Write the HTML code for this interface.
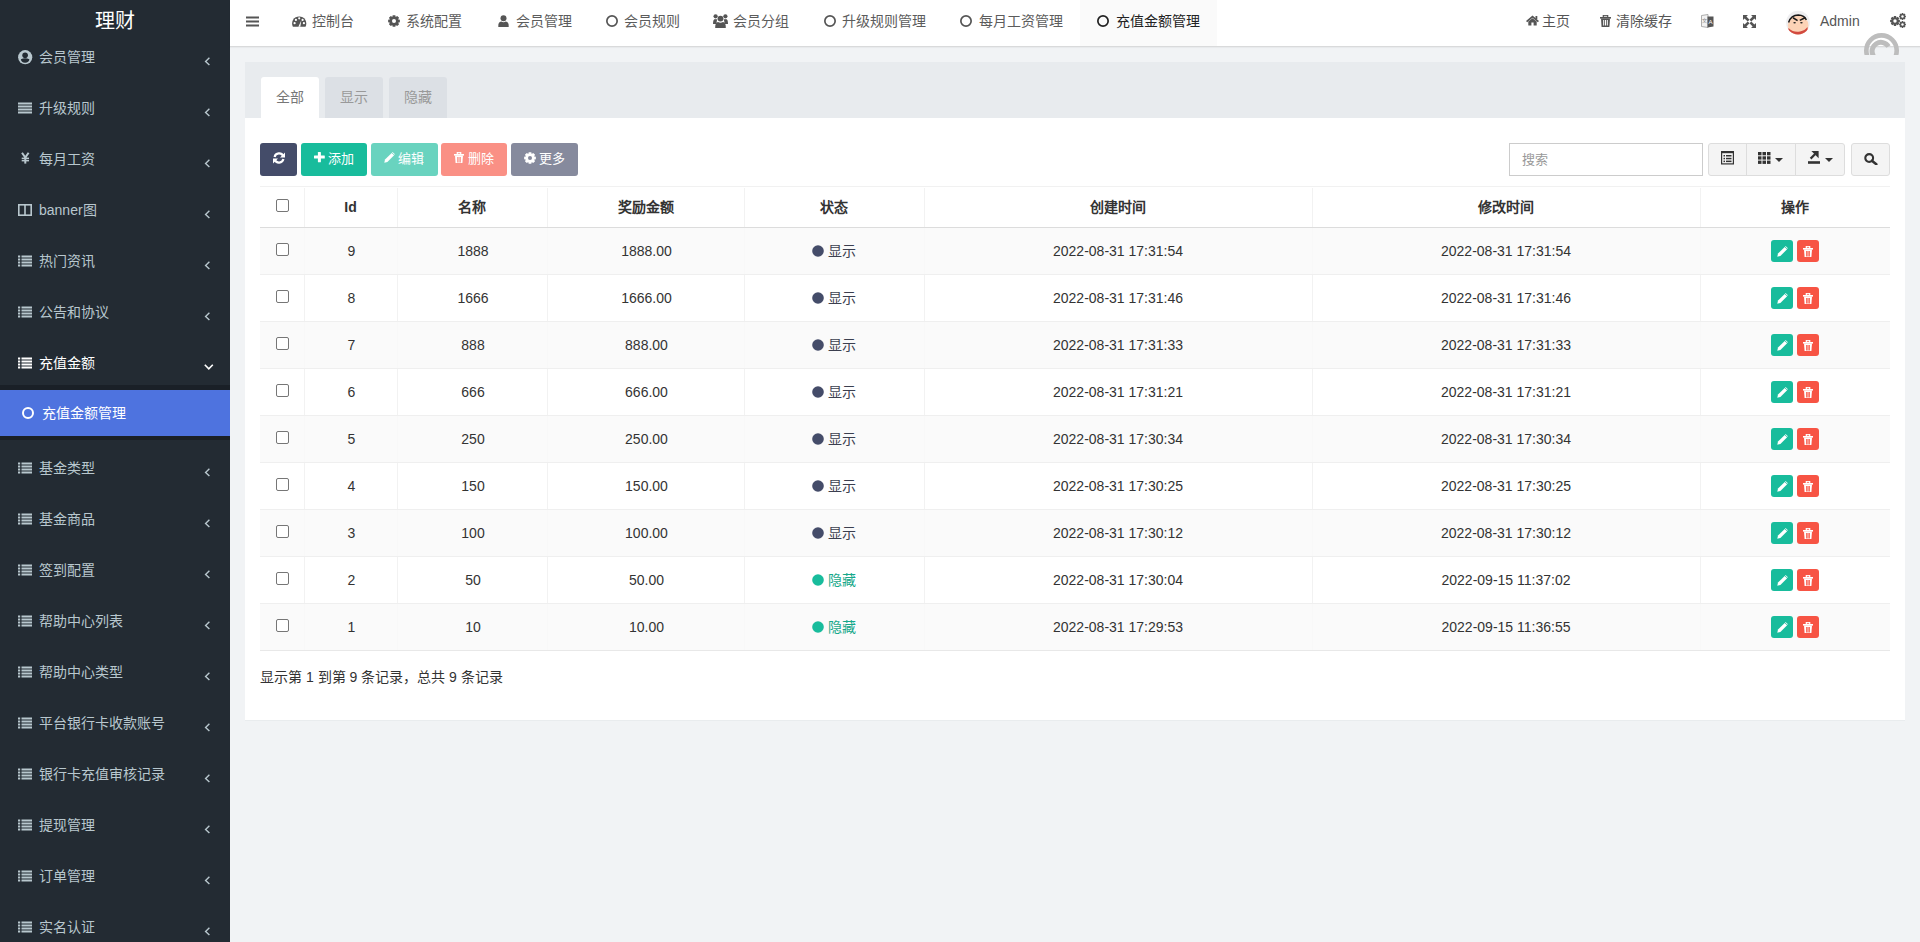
<!DOCTYPE html>
<html lang="zh-CN">
<head>
<meta charset="utf-8">
<style>
*{box-sizing:border-box;margin:0;padding:0}
html,body{width:1920px;height:942px;overflow:hidden}
body{font-family:"Liberation Sans",sans-serif;font-size:14px;color:#333;background:#f1f3f5;position:relative}
svg{display:block}
.abs{position:absolute}
/* sidebar */
#sb{position:absolute;left:0;top:0;width:230px;height:942px;background:#232b33;color:#b8c7ce}
#logo{position:absolute;left:0;top:9px;width:230px;text-align:center;font-size:20px;line-height:24px;color:#fff}
.mi{position:absolute;left:0;width:230px;height:20px;line-height:20px}
.mi .ic{position:absolute;left:18px;top:3px}
.mi .tx{position:absolute;left:39px;top:0;white-space:nowrap}
.mi .chev{position:absolute;left:204px;top:5px}
#tree{position:absolute;left:0;top:385px;width:230px;height:55px;background:#1a2027}
#act{position:absolute;left:0;top:390px;width:230px;height:46px;background:#4e73df;color:#fff}
/* header */
#hd{position:absolute;left:230px;top:0;width:1690px;height:47px;background:#fff;border-bottom:1px solid #d9dadb;box-shadow:0 1px 1px rgba(0,0,0,0.035)}
.nv{position:absolute;top:11px;height:20px;line-height:20px;color:#555;white-space:nowrap}
.nv span{position:absolute;top:0}
/* panel */
#panel{position:absolute;left:245px;top:62px;width:1660px;height:659px;background:#fff;border-bottom:1px solid #e9ecee}
#ph{position:absolute;left:0;top:0;width:1660px;height:56px;background:#e8ebee}
.tab{position:absolute;top:15px;width:58px;height:41px;border-radius:3px 3px 0 0;text-align:center;line-height:40px;color:#999;background:#dce0e5}
.tab.on{background:#fff;color:#777}
.btn{position:absolute;top:81px;height:33px;border-radius:3px;color:#fff;line-height:33px;font-size:13px;white-space:nowrap}
.btn svg{position:absolute}
.btn span{position:absolute;top:0}
.bw{position:absolute;top:81px;height:33px;background:#f4f4f4;border:1px solid #ddd}
/* table */
#tbl{position:absolute;left:15px;top:124px;width:1630px;height:465px;border-top:1px solid #f1f1f1}
.tr{position:absolute;left:0;width:1630px;height:47px}
.td{position:absolute;top:0;height:100%;text-align:center}
.vl{position:absolute;width:1px;background:#f2f2f2}
.cb{position:absolute;width:13px;height:13px;border:1px solid #767676;border-radius:2px;background:#fff}
.cell{position:absolute;height:20px;line-height:20px;text-align:center;white-space:nowrap}
.th{font-weight:bold;color:#333}
.ops{position:absolute;width:22px;height:22px;border-radius:3px}
</style>
</head>
<body>
<!-- SIDEBAR -->
<div id="sb">
  <div id="logo">理财</div>
  <div id="tree"></div>
  <div id="act"></div>
  <!--items-->
  <div class="mi" style="top:47px;color:#b8c7ce"><div class="ic" style="left:18px;top:3px"><svg width="15" height="15" viewBox="0 0 15 15" ><circle cx="7.2" cy="7.2" r="7.1" fill="#b8c7ce"/><circle cx="7.1" cy="5.3" r="2.8" fill="#232b33"/><path d="M2.9 9.2 Q7.1 7.2 11.4 9.2 Q11 12.6 7.1 12.8 Q3.2 12.6 2.9 9.2Z" fill="#232b33"/></svg></div><div class="tx">会员管理</div><div class="chev" style="left:204px;top:10px"><svg width="6" height="10" viewBox="0 0 6 10" ><polyline points="5.4,0.8 1.6,4.4 5.4,8" fill="none" stroke="#b8c7ce" stroke-width="1.4"/></svg></div></div>
<div class="mi" style="top:98px;color:#b8c7ce"><div class="ic" style="left:18px;top:4px"><svg width="14" height="12" viewBox="0 0 14 12" ><rect x="0" y="0.5" width="14" height="2" fill="#b8c7ce"/><rect x="0" y="3.5" width="14" height="2" fill="#b8c7ce"/><rect x="0" y="6.5" width="14" height="2" fill="#b8c7ce"/><rect x="0" y="9.5" width="14" height="2" fill="#b8c7ce"/></svg></div><div class="tx">升级规则</div><div class="chev" style="left:204px;top:10px"><svg width="6" height="10" viewBox="0 0 6 10" ><polyline points="5.4,0.8 1.6,4.4 5.4,8" fill="none" stroke="#b8c7ce" stroke-width="1.4"/></svg></div></div>
<div class="mi" style="top:149px;color:#b8c7ce"><div class="ic" style="left:21px;top:3px"><svg width="9" height="12" viewBox="0 0 9 12" ><polyline points="1,0.8 4.3,5.6 7.6,0.8" fill="none" stroke="#b8c7ce" stroke-width="2"/><rect x="0.7" y="5.6" width="7.3" height="1.5" fill="#b8c7ce"/><rect x="0.7" y="7.9" width="7.3" height="1.5" fill="#b8c7ce"/><rect x="3.3" y="5" width="2" height="6.6" fill="#b8c7ce"/></svg></div><div class="tx">每月工资</div><div class="chev" style="left:204px;top:10px"><svg width="6" height="10" viewBox="0 0 6 10" ><polyline points="5.4,0.8 1.6,4.4 5.4,8" fill="none" stroke="#b8c7ce" stroke-width="1.4"/></svg></div></div>
<div class="mi" style="top:200px;color:#b8c7ce"><div class="ic" style="left:18px;top:4px"><svg width="14" height="12" viewBox="0 0 14 12" ><rect x="0.8" y="0.8" width="12.4" height="10.4" fill="none" stroke="#b8c7ce" stroke-width="1.6"/><rect x="6.2" y="1" width="1.6" height="10" fill="#b8c7ce"/></svg></div><div class="tx">banner图</div><div class="chev" style="left:204px;top:10px"><svg width="6" height="10" viewBox="0 0 6 10" ><polyline points="5.4,0.8 1.6,4.4 5.4,8" fill="none" stroke="#b8c7ce" stroke-width="1.4"/></svg></div></div>
<div class="mi" style="top:251px;color:#b8c7ce"><div class="ic" style="left:18px;top:4px"><svg width="14" height="12" viewBox="0 0 14 12" ><rect x="0" y="0.5" width="2.2" height="2" fill="#b8c7ce"/><rect x="3.5" y="0.5" width="10.5" height="2" fill="#b8c7ce"/><rect x="0" y="3.5" width="2.2" height="2" fill="#b8c7ce"/><rect x="3.5" y="3.5" width="10.5" height="2" fill="#b8c7ce"/><rect x="0" y="6.5" width="2.2" height="2" fill="#b8c7ce"/><rect x="3.5" y="6.5" width="10.5" height="2" fill="#b8c7ce"/><rect x="0" y="9.5" width="2.2" height="2" fill="#b8c7ce"/><rect x="3.5" y="9.5" width="10.5" height="2" fill="#b8c7ce"/></svg></div><div class="tx">热门资讯</div><div class="chev" style="left:204px;top:10px"><svg width="6" height="10" viewBox="0 0 6 10" ><polyline points="5.4,0.8 1.6,4.4 5.4,8" fill="none" stroke="#b8c7ce" stroke-width="1.4"/></svg></div></div>
<div class="mi" style="top:302px;color:#b8c7ce"><div class="ic" style="left:18px;top:4px"><svg width="14" height="12" viewBox="0 0 14 12" ><rect x="0" y="0.5" width="2.2" height="2" fill="#b8c7ce"/><rect x="3.5" y="0.5" width="10.5" height="2" fill="#b8c7ce"/><rect x="0" y="3.5" width="2.2" height="2" fill="#b8c7ce"/><rect x="3.5" y="3.5" width="10.5" height="2" fill="#b8c7ce"/><rect x="0" y="6.5" width="2.2" height="2" fill="#b8c7ce"/><rect x="3.5" y="6.5" width="10.5" height="2" fill="#b8c7ce"/><rect x="0" y="9.5" width="2.2" height="2" fill="#b8c7ce"/><rect x="3.5" y="9.5" width="10.5" height="2" fill="#b8c7ce"/></svg></div><div class="tx">公告和协议</div><div class="chev" style="left:204px;top:10px"><svg width="6" height="10" viewBox="0 0 6 10" ><polyline points="5.4,0.8 1.6,4.4 5.4,8" fill="none" stroke="#b8c7ce" stroke-width="1.4"/></svg></div></div>
<div class="mi" style="top:353px;color:#fff"><div class="ic" style="left:18px;top:4px"><svg width="14" height="12" viewBox="0 0 14 12" ><rect x="0" y="0.5" width="2.2" height="2" fill="#fff"/><rect x="3.5" y="0.5" width="10.5" height="2" fill="#fff"/><rect x="0" y="3.5" width="2.2" height="2" fill="#fff"/><rect x="3.5" y="3.5" width="10.5" height="2" fill="#fff"/><rect x="0" y="6.5" width="2.2" height="2" fill="#fff"/><rect x="3.5" y="6.5" width="10.5" height="2" fill="#fff"/><rect x="0" y="9.5" width="2.2" height="2" fill="#fff"/><rect x="3.5" y="9.5" width="10.5" height="2" fill="#fff"/></svg></div><div class="tx">充值金额</div><div class="chev" style="left:204px;top:11px"><svg width="10" height="6" viewBox="0 0 10 6" ><polyline points="0.8,0.8 4.8,4.8 8.8,0.8" fill="none" stroke="#fff" stroke-width="1.6"/></svg></div></div>
<div class="mi" style="top:458px;color:#b8c7ce"><div class="ic" style="left:18px;top:4px"><svg width="14" height="12" viewBox="0 0 14 12" ><rect x="0" y="0.5" width="2.2" height="2" fill="#b8c7ce"/><rect x="3.5" y="0.5" width="10.5" height="2" fill="#b8c7ce"/><rect x="0" y="3.5" width="2.2" height="2" fill="#b8c7ce"/><rect x="3.5" y="3.5" width="10.5" height="2" fill="#b8c7ce"/><rect x="0" y="6.5" width="2.2" height="2" fill="#b8c7ce"/><rect x="3.5" y="6.5" width="10.5" height="2" fill="#b8c7ce"/><rect x="0" y="9.5" width="2.2" height="2" fill="#b8c7ce"/><rect x="3.5" y="9.5" width="10.5" height="2" fill="#b8c7ce"/></svg></div><div class="tx">基金类型</div><div class="chev" style="left:204px;top:10px"><svg width="6" height="10" viewBox="0 0 6 10" ><polyline points="5.4,0.8 1.6,4.4 5.4,8" fill="none" stroke="#b8c7ce" stroke-width="1.4"/></svg></div></div>
<div class="mi" style="top:509px;color:#b8c7ce"><div class="ic" style="left:18px;top:4px"><svg width="14" height="12" viewBox="0 0 14 12" ><rect x="0" y="0.5" width="2.2" height="2" fill="#b8c7ce"/><rect x="3.5" y="0.5" width="10.5" height="2" fill="#b8c7ce"/><rect x="0" y="3.5" width="2.2" height="2" fill="#b8c7ce"/><rect x="3.5" y="3.5" width="10.5" height="2" fill="#b8c7ce"/><rect x="0" y="6.5" width="2.2" height="2" fill="#b8c7ce"/><rect x="3.5" y="6.5" width="10.5" height="2" fill="#b8c7ce"/><rect x="0" y="9.5" width="2.2" height="2" fill="#b8c7ce"/><rect x="3.5" y="9.5" width="10.5" height="2" fill="#b8c7ce"/></svg></div><div class="tx">基金商品</div><div class="chev" style="left:204px;top:10px"><svg width="6" height="10" viewBox="0 0 6 10" ><polyline points="5.4,0.8 1.6,4.4 5.4,8" fill="none" stroke="#b8c7ce" stroke-width="1.4"/></svg></div></div>
<div class="mi" style="top:560px;color:#b8c7ce"><div class="ic" style="left:18px;top:4px"><svg width="14" height="12" viewBox="0 0 14 12" ><rect x="0" y="0.5" width="2.2" height="2" fill="#b8c7ce"/><rect x="3.5" y="0.5" width="10.5" height="2" fill="#b8c7ce"/><rect x="0" y="3.5" width="2.2" height="2" fill="#b8c7ce"/><rect x="3.5" y="3.5" width="10.5" height="2" fill="#b8c7ce"/><rect x="0" y="6.5" width="2.2" height="2" fill="#b8c7ce"/><rect x="3.5" y="6.5" width="10.5" height="2" fill="#b8c7ce"/><rect x="0" y="9.5" width="2.2" height="2" fill="#b8c7ce"/><rect x="3.5" y="9.5" width="10.5" height="2" fill="#b8c7ce"/></svg></div><div class="tx">签到配置</div><div class="chev" style="left:204px;top:10px"><svg width="6" height="10" viewBox="0 0 6 10" ><polyline points="5.4,0.8 1.6,4.4 5.4,8" fill="none" stroke="#b8c7ce" stroke-width="1.4"/></svg></div></div>
<div class="mi" style="top:611px;color:#b8c7ce"><div class="ic" style="left:18px;top:4px"><svg width="14" height="12" viewBox="0 0 14 12" ><rect x="0" y="0.5" width="2.2" height="2" fill="#b8c7ce"/><rect x="3.5" y="0.5" width="10.5" height="2" fill="#b8c7ce"/><rect x="0" y="3.5" width="2.2" height="2" fill="#b8c7ce"/><rect x="3.5" y="3.5" width="10.5" height="2" fill="#b8c7ce"/><rect x="0" y="6.5" width="2.2" height="2" fill="#b8c7ce"/><rect x="3.5" y="6.5" width="10.5" height="2" fill="#b8c7ce"/><rect x="0" y="9.5" width="2.2" height="2" fill="#b8c7ce"/><rect x="3.5" y="9.5" width="10.5" height="2" fill="#b8c7ce"/></svg></div><div class="tx">帮助中心列表</div><div class="chev" style="left:204px;top:10px"><svg width="6" height="10" viewBox="0 0 6 10" ><polyline points="5.4,0.8 1.6,4.4 5.4,8" fill="none" stroke="#b8c7ce" stroke-width="1.4"/></svg></div></div>
<div class="mi" style="top:662px;color:#b8c7ce"><div class="ic" style="left:18px;top:4px"><svg width="14" height="12" viewBox="0 0 14 12" ><rect x="0" y="0.5" width="2.2" height="2" fill="#b8c7ce"/><rect x="3.5" y="0.5" width="10.5" height="2" fill="#b8c7ce"/><rect x="0" y="3.5" width="2.2" height="2" fill="#b8c7ce"/><rect x="3.5" y="3.5" width="10.5" height="2" fill="#b8c7ce"/><rect x="0" y="6.5" width="2.2" height="2" fill="#b8c7ce"/><rect x="3.5" y="6.5" width="10.5" height="2" fill="#b8c7ce"/><rect x="0" y="9.5" width="2.2" height="2" fill="#b8c7ce"/><rect x="3.5" y="9.5" width="10.5" height="2" fill="#b8c7ce"/></svg></div><div class="tx">帮助中心类型</div><div class="chev" style="left:204px;top:10px"><svg width="6" height="10" viewBox="0 0 6 10" ><polyline points="5.4,0.8 1.6,4.4 5.4,8" fill="none" stroke="#b8c7ce" stroke-width="1.4"/></svg></div></div>
<div class="mi" style="top:713px;color:#b8c7ce"><div class="ic" style="left:18px;top:4px"><svg width="14" height="12" viewBox="0 0 14 12" ><rect x="0" y="0.5" width="2.2" height="2" fill="#b8c7ce"/><rect x="3.5" y="0.5" width="10.5" height="2" fill="#b8c7ce"/><rect x="0" y="3.5" width="2.2" height="2" fill="#b8c7ce"/><rect x="3.5" y="3.5" width="10.5" height="2" fill="#b8c7ce"/><rect x="0" y="6.5" width="2.2" height="2" fill="#b8c7ce"/><rect x="3.5" y="6.5" width="10.5" height="2" fill="#b8c7ce"/><rect x="0" y="9.5" width="2.2" height="2" fill="#b8c7ce"/><rect x="3.5" y="9.5" width="10.5" height="2" fill="#b8c7ce"/></svg></div><div class="tx">平台银行卡收款账号</div><div class="chev" style="left:204px;top:10px"><svg width="6" height="10" viewBox="0 0 6 10" ><polyline points="5.4,0.8 1.6,4.4 5.4,8" fill="none" stroke="#b8c7ce" stroke-width="1.4"/></svg></div></div>
<div class="mi" style="top:764px;color:#b8c7ce"><div class="ic" style="left:18px;top:4px"><svg width="14" height="12" viewBox="0 0 14 12" ><rect x="0" y="0.5" width="2.2" height="2" fill="#b8c7ce"/><rect x="3.5" y="0.5" width="10.5" height="2" fill="#b8c7ce"/><rect x="0" y="3.5" width="2.2" height="2" fill="#b8c7ce"/><rect x="3.5" y="3.5" width="10.5" height="2" fill="#b8c7ce"/><rect x="0" y="6.5" width="2.2" height="2" fill="#b8c7ce"/><rect x="3.5" y="6.5" width="10.5" height="2" fill="#b8c7ce"/><rect x="0" y="9.5" width="2.2" height="2" fill="#b8c7ce"/><rect x="3.5" y="9.5" width="10.5" height="2" fill="#b8c7ce"/></svg></div><div class="tx">银行卡充值审核记录</div><div class="chev" style="left:204px;top:10px"><svg width="6" height="10" viewBox="0 0 6 10" ><polyline points="5.4,0.8 1.6,4.4 5.4,8" fill="none" stroke="#b8c7ce" stroke-width="1.4"/></svg></div></div>
<div class="mi" style="top:815px;color:#b8c7ce"><div class="ic" style="left:18px;top:4px"><svg width="14" height="12" viewBox="0 0 14 12" ><rect x="0" y="0.5" width="2.2" height="2" fill="#b8c7ce"/><rect x="3.5" y="0.5" width="10.5" height="2" fill="#b8c7ce"/><rect x="0" y="3.5" width="2.2" height="2" fill="#b8c7ce"/><rect x="3.5" y="3.5" width="10.5" height="2" fill="#b8c7ce"/><rect x="0" y="6.5" width="2.2" height="2" fill="#b8c7ce"/><rect x="3.5" y="6.5" width="10.5" height="2" fill="#b8c7ce"/><rect x="0" y="9.5" width="2.2" height="2" fill="#b8c7ce"/><rect x="3.5" y="9.5" width="10.5" height="2" fill="#b8c7ce"/></svg></div><div class="tx">提现管理</div><div class="chev" style="left:204px;top:10px"><svg width="6" height="10" viewBox="0 0 6 10" ><polyline points="5.4,0.8 1.6,4.4 5.4,8" fill="none" stroke="#b8c7ce" stroke-width="1.4"/></svg></div></div>
<div class="mi" style="top:866px;color:#b8c7ce"><div class="ic" style="left:18px;top:4px"><svg width="14" height="12" viewBox="0 0 14 12" ><rect x="0" y="0.5" width="2.2" height="2" fill="#b8c7ce"/><rect x="3.5" y="0.5" width="10.5" height="2" fill="#b8c7ce"/><rect x="0" y="3.5" width="2.2" height="2" fill="#b8c7ce"/><rect x="3.5" y="3.5" width="10.5" height="2" fill="#b8c7ce"/><rect x="0" y="6.5" width="2.2" height="2" fill="#b8c7ce"/><rect x="3.5" y="6.5" width="10.5" height="2" fill="#b8c7ce"/><rect x="0" y="9.5" width="2.2" height="2" fill="#b8c7ce"/><rect x="3.5" y="9.5" width="10.5" height="2" fill="#b8c7ce"/></svg></div><div class="tx">订单管理</div><div class="chev" style="left:204px;top:10px"><svg width="6" height="10" viewBox="0 0 6 10" ><polyline points="5.4,0.8 1.6,4.4 5.4,8" fill="none" stroke="#b8c7ce" stroke-width="1.4"/></svg></div></div>
<div class="mi" style="top:917px;color:#b8c7ce"><div class="ic" style="left:18px;top:4px"><svg width="14" height="12" viewBox="0 0 14 12" ><rect x="0" y="0.5" width="2.2" height="2" fill="#b8c7ce"/><rect x="3.5" y="0.5" width="10.5" height="2" fill="#b8c7ce"/><rect x="0" y="3.5" width="2.2" height="2" fill="#b8c7ce"/><rect x="3.5" y="3.5" width="10.5" height="2" fill="#b8c7ce"/><rect x="0" y="6.5" width="2.2" height="2" fill="#b8c7ce"/><rect x="3.5" y="6.5" width="10.5" height="2" fill="#b8c7ce"/><rect x="0" y="9.5" width="2.2" height="2" fill="#b8c7ce"/><rect x="3.5" y="9.5" width="10.5" height="2" fill="#b8c7ce"/></svg></div><div class="tx">实名认证</div><div class="chev" style="left:204px;top:10px"><svg width="6" height="10" viewBox="0 0 6 10" ><polyline points="5.4,0.8 1.6,4.4 5.4,8" fill="none" stroke="#b8c7ce" stroke-width="1.4"/></svg></div></div>
<div class="mi" style="top:403px;color:#fff"><div class="ic" style="left:22px;top:4px"><svg width="12" height="12" viewBox="0 0 12 12" ><circle cx="6.0" cy="6.0" r="5.0" fill="none" stroke="#fff" stroke-width="2"/></svg></div><div class="tx" style="left:42px">充值金额管理</div></div>

</div>

<!-- HEADER -->
<div id="hd">
<div class="abs" style="left:16px;top:16px"><svg width="13" height="11" viewBox="0 0 13 11" ><rect x="0" y="0.5" width="13" height="2" fill="#555"/><rect x="0" y="4.5" width="13" height="2" fill="#555"/><rect x="0" y="8.5" width="13" height="2" fill="#555"/></svg></div>
<div class="abs" style="left:850px;top:0;width:137px;height:46px;background:#fafafa"></div>
<div class="nv" style="left:62px;color:#5c5c5c"><div class="abs" style="left:0;top:5px"><svg width="15" height="11" viewBox="0 0 15 11" ><path d="M0.9 10.8 A7.1 7.1 0 1 1 13.5 10.8 Z" fill="#555"/><circle cx="2.6" cy="7.2" r="1.1" fill="#fff"/><circle cx="3.9" cy="3.9" r="1.1" fill="#fff"/><circle cx="7.2" cy="2.3" r="1.1" fill="#fff"/><circle cx="10.6" cy="3.9" r="1.1" fill="#fff"/><circle cx="11.9" cy="7.2" r="1.1" fill="#fff"/><path d="M6.3 10.8 L9.3 4.6 L8.3 10.8 Z" fill="#fff"/></svg></div><span style="left:20px">控制台</span></div>
<div class="nv" style="left:158px;color:#5c5c5c"><div class="abs" style="left:0;top:4px"><svg width="12" height="12" viewBox="0 0 12 12" ><polygon points="11.86,4.69 11.86,7.31 9.98,7.68 10.00,7.62 11.07,9.21 9.21,11.07 7.62,10.00 7.68,9.98 7.31,11.86 4.69,11.86 4.32,9.98 4.38,10.00 2.79,11.07 0.93,9.21 2.00,7.62 2.02,7.68 0.14,7.31 0.14,4.69 2.02,4.32 2.00,4.38 0.93,2.79 2.79,0.93 4.38,2.00 4.32,2.02 4.69,0.14 7.31,0.14 7.68,2.02 7.62,2.00 9.21,0.93 11.07,2.79 10.00,4.38 9.98,4.32" fill="#555"/><circle cx="6.0" cy="6.0" r="2.04" fill="#fff"/></svg></div><span style="left:18px">系统配置</span></div>
<div class="nv" style="left:268px;color:#5c5c5c"><div class="abs" style="left:0;top:4px"><svg width="11" height="12" viewBox="0 0 11 12" ><circle cx="5.5" cy="3.2" r="3" fill="#555"/><path d="M0.3 12 Q0 6.8 3.2 6.6 Q5.5 8 7.8 6.6 Q11 6.8 10.7 12 Z" fill="#555"/></svg></div><span style="left:18px">会员管理</span></div>
<div class="nv" style="left:376px;color:#5c5c5c"><div class="abs" style="left:0;top:4px"><svg width="12" height="12" viewBox="0 0 12 12" ><circle cx="6.0" cy="6.0" r="5.15" fill="none" stroke="#555" stroke-width="1.7"/></svg></div><span style="left:18px">会员规则</span></div>
<div class="nv" style="left:483px;color:#5c5c5c"><div class="abs" style="left:0;top:3px"><svg width="15" height="14" viewBox="0 0 15 14" ><circle cx="7.5" cy="4.6" r="2.9" fill="#555"/><path d="M2.2 14 Q2 8.3 5 8 Q7.5 9.3 10 8 Q13 8.3 12.8 14Z" fill="#555"/><circle cx="2.6" cy="2.3" r="2.1" fill="#555"/><path d="M0 10 Q0 5.2 2 5 Q3 5.6 4.4 5.2 Q3.3 7 3.5 10Z" fill="#555"/><circle cx="12.4" cy="2.3" r="2.1" fill="#555"/><path d="M15 10 Q15 5.2 13 5 Q12 5.6 10.6 5.2 Q11.7 7 11.5 10Z" fill="#555"/></svg></div><span style="left:20px">会员分组</span></div>
<div class="nv" style="left:594px;color:#5c5c5c"><div class="abs" style="left:0;top:4px"><svg width="12" height="12" viewBox="0 0 12 12" ><circle cx="6.0" cy="6.0" r="5.15" fill="none" stroke="#555" stroke-width="1.7"/></svg></div><span style="left:18px">升级规则管理</span></div>
<div class="nv" style="left:730px;color:#5c5c5c"><div class="abs" style="left:0;top:4px"><svg width="12" height="12" viewBox="0 0 12 12" ><circle cx="6.0" cy="6.0" r="5.15" fill="none" stroke="#555" stroke-width="1.7"/></svg></div><span style="left:19px">每月工资管理</span></div>
<div class="nv" style="left:867px;color:#222"><div class="abs" style="left:0;top:4px"><svg width="12" height="12" viewBox="0 0 12 12" ><circle cx="6.0" cy="6.0" r="5.15" fill="none" stroke="#222" stroke-width="1.7"/></svg></div><span style="left:19px">充值金额管理</span></div>
<div class="nv" style="left:1296px"><div class="abs" style="left:0;top:4px"><svg width="13" height="11" viewBox="0 0 13 11" ><path d="M6.5 0.5 L13 6 L11.8 7.2 L6.5 2.8 L1.2 7.2 L0 6Z" fill="#555"/><path d="M2.3 6.6 L6.5 3.3 L10.7 6.6 V10.5 H7.6 V7.6 H5.4 V10.5 H2.3Z" fill="#555"/><rect x="9.5" y="1" width="1.8" height="3" fill="#555"/></svg></div><span style="left:16px">主页</span></div>
<div class="nv" style="left:1370px"><div class="abs" style="left:0;top:4px"><svg width="11" height="12" viewBox="0 0 11 12" ><rect x="0" y="2" width="11" height="1.6" fill="#555"/><rect x="3.3" y="0.3" width="4.4" height="2" fill="none" stroke="#555" stroke-width="1.2"/><path d="M1 3.5 H10 L9.4 12 H1.6Z" fill="#555"/><rect x="3.2" y="5" width="1" height="5.5" fill="#fff"/><rect x="5.0" y="5" width="1" height="5.5" fill="#fff"/><rect x="6.8" y="5" width="1" height="5.5" fill="#fff"/></svg></div><span style="left:16px">清除缓存</span></div>
<div class="abs" style="left:1471px;top:14px"><svg width="13" height="14" viewBox="0 0 13 14" ><path d="M0.5 1.5 L7 0.5 V13.5 L0.5 12.5Z" fill="#f2f2f2" stroke="#999" stroke-width="0.8"/><path d="M6.5 2.5 L12.5 2.5 V12.5 L6.5 13.5Z" fill="#555"/><text x="9.5" y="10" font-size="6" fill="#fff" text-anchor="middle" font-family="Liberation Sans">A</text><text x="3.5" y="8" font-size="5" fill="#888" text-anchor="middle">文</text></svg></div>
<div class="abs" style="left:1513px;top:15px"><svg width="13" height="13" viewBox="0 0 13 13" ><path d="M0 0 H5 L3.4 1.6 L6.5 4.7 L4.7 6.5 L1.6 3.4 L0 5Z" fill="#555"/><path d="M13 0 V5 L11.4 3.4 L8.3 6.5 L6.5 4.7 L9.6 1.6 L8 0Z" fill="#555"/><path d="M0 13 V8 L1.6 9.6 L4.7 6.5 L6.5 8.3 L3.4 11.4 L5 13Z" fill="#555"/><path d="M13 13 H8 L9.6 11.4 L6.5 8.3 L8.3 6.5 L11.4 9.6 L13 8Z" fill="#555"/></svg></div>
<div class="abs" style="left:1556px;top:10px"><svg width="24" height="26" viewBox="0 0 24 26"><defs><clipPath id="avc"><circle cx="12" cy="12.7" r="11.9"/></clipPath></defs><circle cx="12" cy="12.7" r="11.9" fill="#eeeef0"/><g clip-path="url(#avc)"><ellipse cx="12.2" cy="15.6" rx="10.3" ry="10.4" fill="#fcd3b6"/><path d="M2.4 18 Q8 23 14 21.5 Q19 20.5 21.5 17 L22 26 L2 26Z" fill="#d24a3f"/><path d="M2.6 12.5 Q5 5.2 12.3 5.1 Q18.5 5.3 20.3 10" fill="none" stroke="#1a1a1a" stroke-width="1.5"/><path d="M7 7.8 L11.6 10.6" stroke="#1a1a1a" stroke-width="1.6"/><path d="M13.8 10.4 L19 7.8" stroke="#1a1a1a" stroke-width="1.6"/><ellipse cx="8.6" cy="12.7" rx="1.3" ry="0.8" fill="#222"/><ellipse cx="15.4" cy="12.7" rx="1.3" ry="0.8" fill="#222"/></g></svg></div>
<div class="nv" style="left:1590px"><span style="left:0">Admin</span></div>
<div class="abs" style="left:1660px;top:13px"><svg width="16" height="15" viewBox="0 0 16 15" ><g transform="translate(0,3)"><polygon points="9.88,3.91 9.88,6.09 8.32,6.40 8.34,6.35 9.22,7.68 7.68,9.22 6.35,8.34 6.40,8.32 6.09,9.88 3.91,9.88 3.60,8.32 3.65,8.34 2.32,9.22 0.78,7.68 1.66,6.35 1.68,6.40 0.12,6.09 0.12,3.91 1.68,3.60 1.66,3.65 0.78,2.32 2.32,0.78 3.65,1.66 3.60,1.68 3.91,0.12 6.09,0.12 6.40,1.68 6.35,1.66 7.68,0.78 9.22,2.32 8.34,3.65 8.32,3.60" fill="#555"/><circle cx="5.0" cy="5.0" r="1.70" fill="#fff"/></g><g transform="translate(9,0)"><polygon points="6.92,2.74 6.92,4.26 5.82,4.48 5.84,4.45 6.46,5.38 5.38,6.46 4.45,5.84 4.48,5.82 4.26,6.92 2.74,6.92 2.52,5.82 2.55,5.84 1.62,6.46 0.54,5.38 1.16,4.45 1.18,4.48 0.08,4.26 0.08,2.74 1.18,2.52 1.16,2.55 0.54,1.62 1.62,0.54 2.55,1.16 2.52,1.18 2.74,0.08 4.26,0.08 4.48,1.18 4.45,1.16 5.38,0.54 6.46,1.62 5.84,2.55 5.82,2.52" fill="#555"/><circle cx="3.5" cy="3.5" r="1.19" fill="#fff"/></g><g transform="translate(9,8)"><polygon points="6.92,2.74 6.92,4.26 5.82,4.48 5.84,4.45 6.46,5.38 5.38,6.46 4.45,5.84 4.48,5.82 4.26,6.92 2.74,6.92 2.52,5.82 2.55,5.84 1.62,6.46 0.54,5.38 1.16,4.45 1.18,4.48 0.08,4.26 0.08,2.74 1.18,2.52 1.16,2.55 0.54,1.62 1.62,0.54 2.55,1.16 2.52,1.18 2.74,0.08 4.26,0.08 4.48,1.18 4.45,1.16 5.38,0.54 6.46,1.62 5.84,2.55 5.82,2.52" fill="#555"/><circle cx="3.5" cy="3.5" r="1.19" fill="#fff"/></g></svg></div>

</div>

<!-- PANEL -->
<div id="panel">
  <div id="ph">
    <div class="tab on" style="left:16px">全部</div>
    <div class="tab" style="left:80px">显示</div>
    <div class="tab" style="left:144px">隐藏</div>
  </div>
<div class="btn" style="left:15px;width:37px;background:#444c69"><div class="abs" style="left:13px;top:9px"><svg width="12" height="12" viewBox="0 0 12 12" ><path d="M10.3 4.2 A4.6 4.6 0 0 0 1.6 5" fill="none" stroke="#fff" stroke-width="2.2"/><path d="M12 0.5 V5.5 H7Z" fill="#fff"/><path d="M1.7 7.8 A4.6 4.6 0 0 0 10.4 7" fill="none" stroke="#fff" stroke-width="2.2"/><path d="M0 11.5 V6.5 H5Z" fill="#fff"/></svg></div></div>
<div class="btn" style="left:56px;width:66px;background:#18bc9c"><div class="abs" style="left:13px;top:9px"><svg width="11" height="11" viewBox="0 0 11 11" ><rect x="3.9" y="0" width="3" height="10.2" rx="0.5" fill="#fff"/><rect x="0" y="3.6" width="10.8" height="3" rx="0.5" fill="#fff"/></svg></div><span style="left:27px;top:-1px">添加</span></div>
<div class="btn" style="left:126px;width:67px;background:#69d3bf"><div class="abs" style="left:13px;top:9px"><svg width="11" height="11" viewBox="0 0 11 11" ><path d="M0.3 10.7 L1 7.6 L7.7 0.9 L10.1 3.3 L3.4 10Z" fill="#fff"/><path d="M8.4 0.2 L10.8 2.6" stroke="#fff" stroke-width="1"/></svg></div><span style="left:27px;top:-1px">编辑</span></div>
<div class="btn" style="left:196px;width:66px;background:#fa9085"><div class="abs" style="left:13px;top:9px"><svg width="10" height="11" viewBox="0 0 10 11" ><rect x="0" y="2" width="10" height="1.6" fill="#fff"/><rect x="3.3" y="0.3" width="3.4000000000000004" height="2" fill="none" stroke="#fff" stroke-width="1.2"/><path d="M1 3.5 H9 L8.4 11 H1.6Z" fill="#fff"/><rect x="3.2" y="5" width="1" height="5.5" fill="#fa9085"/><rect x="4.5" y="5" width="1" height="5.5" fill="#fa9085"/><rect x="5.8" y="5" width="1" height="5.5" fill="#fa9085"/></svg></div><span style="left:27px;top:-1px">删除</span></div>
<div class="btn" style="left:266px;width:67px;background:#868a9d"><div class="abs" style="left:13px;top:9px"><svg width="12" height="12" viewBox="0 0 12 12" ><polygon points="11.86,4.69 11.86,7.31 9.98,7.68 10.00,7.62 11.07,9.21 9.21,11.07 7.62,10.00 7.68,9.98 7.31,11.86 4.69,11.86 4.32,9.98 4.38,10.00 2.79,11.07 0.93,9.21 2.00,7.62 2.02,7.68 0.14,7.31 0.14,4.69 2.02,4.32 2.00,4.38 0.93,2.79 2.79,0.93 4.38,2.00 4.32,2.02 4.69,0.14 7.31,0.14 7.68,2.02 7.62,2.00 9.21,0.93 11.07,2.79 10.00,4.38 9.98,4.32" fill="#fff"/><circle cx="6.0" cy="6.0" r="2.04" fill="#868a9d"/></svg></div><span style="left:28px;top:-1px">更多</span></div>
<div class="abs" style="left:1264px;top:81px;width:194px;height:33px;border:1px solid #ccc;background:#fff"><span class="abs" style="left:12px;top:6px;line-height:20px;color:#999;font-size:13px">搜索</span></div>
<div class="bw" style="left:1463px;width:39px;border-radius:3px 0 0 3px"></div><div class="bw" style="left:1501px;width:50px;"></div><div class="bw" style="left:1550px;width:50px;border-radius:0 3px 3px 0"></div><div class="bw" style="left:1606px;width:39px;border-radius:3px"></div>
<div class="abs" style="left:1476px;top:89px"><svg width="13" height="14" viewBox="0 0 13 14" ><rect x="0.6" y="0.6" width="11.8" height="12.3" fill="none" stroke="#333" stroke-width="1.2"/><rect x="0.6" y="0.6" width="11.8" height="1.6" fill="#333"/><rect x="2.5" y="4" width="1.5" height="1.5" fill="#333"/><rect x="5" y="4" width="5.5" height="1.5" fill="#333"/><rect x="2.5" y="6.8" width="1.5" height="1.5" fill="#333"/><rect x="5" y="6.8" width="5.5" height="1.5" fill="#333"/><rect x="2.5" y="9.6" width="1.5" height="1.5" fill="#333"/><rect x="5" y="9.6" width="5.5" height="1.5" fill="#333"/></svg></div><div class="abs" style="left:1513px;top:90px"><svg width="13" height="12" viewBox="0 0 13 12" ><rect x="0" y="0" width="3.5" height="3.3" fill="#333"/><rect x="4.5" y="0" width="3.5" height="3.3" fill="#333"/><rect x="9" y="0" width="3.5" height="3.3" fill="#333"/><rect x="0" y="4.3" width="3.5" height="3.3" fill="#333"/><rect x="4.5" y="4.3" width="3.5" height="3.3" fill="#333"/><rect x="9" y="4.3" width="3.5" height="3.3" fill="#333"/><rect x="0" y="8.6" width="3.5" height="3.3" fill="#333"/><rect x="4.5" y="8.6" width="3.5" height="3.3" fill="#333"/><rect x="9" y="8.6" width="3.5" height="3.3" fill="#333"/></svg></div><div class="abs" style="left:1530px;top:96px"><svg width="8" height="4" viewBox="0 0 8 4" ><path d="M0 0 H8 L4 4Z" fill="#333"/></svg></div><div class="abs" style="left:1563px;top:89px"><svg width="13" height="13" viewBox="0 0 13 13" ><rect x="0" y="10.2" width="12" height="2.6" fill="#333"/><path d="M3.4 0 H10.6 V7.2Z" fill="#333"/><path d="M2.6 7.6 L7.2 3" stroke="#333" stroke-width="2.2"/></svg></div><div class="abs" style="left:1580px;top:96px"><svg width="8" height="4" viewBox="0 0 8 4" ><path d="M0 0 H8 L4 4Z" fill="#333"/></svg></div><div class="abs" style="left:1619px;top:91px"><svg width="14" height="12" viewBox="0 0 14 12" ><circle cx="5.2" cy="5" r="3.9" fill="none" stroke="#333" stroke-width="2.1"/><path d="M7.9 7.7 L12.3 11.2" stroke="#333" stroke-width="2.6" stroke-linecap="round"/></svg></div>

  <div id="tbl">
<div class="cb" style="left:16px;top:12px"></div><div class="cell th" style="left:44px;width:93px;top:10px">Id</div><div class="cell th" style="left:137px;width:150px;top:10px">名称</div><div class="cell th" style="left:287px;width:197px;top:10px">奖励金额</div><div class="cell th" style="left:484px;width:180px;top:10px">状态</div><div class="cell th" style="left:664px;width:388px;top:10px">创建时间</div><div class="cell th" style="left:1052px;width:388px;top:10px">修改时间</div><div class="cell th" style="left:1440px;width:190px;top:10px">操作</div>
<div class="vl" style="left:44px;top:1px;height:463px"></div><div class="vl" style="left:137px;top:1px;height:463px"></div><div class="vl" style="left:287px;top:1px;height:463px"></div><div class="vl" style="left:484px;top:1px;height:463px"></div><div class="vl" style="left:664px;top:1px;height:463px"></div><div class="vl" style="left:1052px;top:1px;height:463px"></div><div class="vl" style="left:1440px;top:1px;height:463px"></div><div class="tr" style="top:40px;height:47px;background:rgba(249,249,249,0.85);border-top:1px solid #dcdcdc"></div>
<div class="tr" style="top:87px;height:47px;background:transparent;border-top:1px solid #efefef"></div>
<div class="tr" style="top:134px;height:47px;background:rgba(249,249,249,0.85);border-top:1px solid #efefef"></div>
<div class="tr" style="top:181px;height:47px;background:transparent;border-top:1px solid #efefef"></div>
<div class="tr" style="top:228px;height:47px;background:rgba(249,249,249,0.85);border-top:1px solid #efefef"></div>
<div class="tr" style="top:275px;height:47px;background:transparent;border-top:1px solid #efefef"></div>
<div class="tr" style="top:322px;height:47px;background:rgba(249,249,249,0.85);border-top:1px solid #efefef"></div>
<div class="tr" style="top:369px;height:47px;background:transparent;border-top:1px solid #efefef"></div>
<div class="tr" style="top:416px;height:47px;background:rgba(249,249,249,0.85);border-top:1px solid #efefef"></div>

<div class="cb" style="left:16px;top:56px"></div><div class="cell" style="left:45px;width:93px;top:54px">9</div><div class="cell" style="left:138px;width:150px;top:54px">1888</div><div class="cell" style="left:288px;width:197px;top:54px">1888.00</div><div class="cell" style="left:664px;width:388px;top:54px">2022-08-31 17:31:54</div><div class="cell" style="left:1052px;width:388px;top:54px">2022-08-31 17:31:54</div><div class="cell" style="left:552px;top:54px;color:#444c69"><svg class="abs" style="left:0;top:4px" width="12" height="12"><circle cx="6" cy="6" r="5.8" fill="#444c69"/></svg><span class="abs" style="left:16px;top:0;color:#3b3f4f">显示</span></div><div class="ops" style="left:1511px;top:53px;background:#18bc9c"><div class="abs" style="left:6px;top:5.5px"><svg width="11" height="11" viewBox="0 0 11 11" ><path d="M0.3 10.7 L1 7.6 L7.7 0.9 L10.1 3.3 L3.4 10Z" fill="#fff"/><path d="M8.4 0.2 L10.8 2.6" stroke="#fff" stroke-width="1"/></svg></div></div><div class="ops" style="left:1537px;top:53px;background:#f75444"><div class="abs" style="left:6px;top:5.5px"><svg width="10" height="11" viewBox="0 0 10 11" ><rect x="0" y="2" width="10" height="1.6" fill="#fff"/><rect x="3.3" y="0.3" width="3.4000000000000004" height="2" fill="none" stroke="#fff" stroke-width="1.2"/><path d="M1 3.5 H9 L8.4 11 H1.6Z" fill="#fff"/><rect x="3.2" y="5" width="1" height="5.5" fill="#f75444"/><rect x="4.5" y="5" width="1" height="5.5" fill="#f75444"/><rect x="5.8" y="5" width="1" height="5.5" fill="#f75444"/></svg></div></div>
<div class="cb" style="left:16px;top:103px"></div><div class="cell" style="left:45px;width:93px;top:101px">8</div><div class="cell" style="left:138px;width:150px;top:101px">1666</div><div class="cell" style="left:288px;width:197px;top:101px">1666.00</div><div class="cell" style="left:664px;width:388px;top:101px">2022-08-31 17:31:46</div><div class="cell" style="left:1052px;width:388px;top:101px">2022-08-31 17:31:46</div><div class="cell" style="left:552px;top:101px;color:#444c69"><svg class="abs" style="left:0;top:4px" width="12" height="12"><circle cx="6" cy="6" r="5.8" fill="#444c69"/></svg><span class="abs" style="left:16px;top:0;color:#3b3f4f">显示</span></div><div class="ops" style="left:1511px;top:100px;background:#18bc9c"><div class="abs" style="left:6px;top:5.5px"><svg width="11" height="11" viewBox="0 0 11 11" ><path d="M0.3 10.7 L1 7.6 L7.7 0.9 L10.1 3.3 L3.4 10Z" fill="#fff"/><path d="M8.4 0.2 L10.8 2.6" stroke="#fff" stroke-width="1"/></svg></div></div><div class="ops" style="left:1537px;top:100px;background:#f75444"><div class="abs" style="left:6px;top:5.5px"><svg width="10" height="11" viewBox="0 0 10 11" ><rect x="0" y="2" width="10" height="1.6" fill="#fff"/><rect x="3.3" y="0.3" width="3.4000000000000004" height="2" fill="none" stroke="#fff" stroke-width="1.2"/><path d="M1 3.5 H9 L8.4 11 H1.6Z" fill="#fff"/><rect x="3.2" y="5" width="1" height="5.5" fill="#f75444"/><rect x="4.5" y="5" width="1" height="5.5" fill="#f75444"/><rect x="5.8" y="5" width="1" height="5.5" fill="#f75444"/></svg></div></div>
<div class="cb" style="left:16px;top:150px"></div><div class="cell" style="left:45px;width:93px;top:148px">7</div><div class="cell" style="left:138px;width:150px;top:148px">888</div><div class="cell" style="left:288px;width:197px;top:148px">888.00</div><div class="cell" style="left:664px;width:388px;top:148px">2022-08-31 17:31:33</div><div class="cell" style="left:1052px;width:388px;top:148px">2022-08-31 17:31:33</div><div class="cell" style="left:552px;top:148px;color:#444c69"><svg class="abs" style="left:0;top:4px" width="12" height="12"><circle cx="6" cy="6" r="5.8" fill="#444c69"/></svg><span class="abs" style="left:16px;top:0;color:#3b3f4f">显示</span></div><div class="ops" style="left:1511px;top:147px;background:#18bc9c"><div class="abs" style="left:6px;top:5.5px"><svg width="11" height="11" viewBox="0 0 11 11" ><path d="M0.3 10.7 L1 7.6 L7.7 0.9 L10.1 3.3 L3.4 10Z" fill="#fff"/><path d="M8.4 0.2 L10.8 2.6" stroke="#fff" stroke-width="1"/></svg></div></div><div class="ops" style="left:1537px;top:147px;background:#f75444"><div class="abs" style="left:6px;top:5.5px"><svg width="10" height="11" viewBox="0 0 10 11" ><rect x="0" y="2" width="10" height="1.6" fill="#fff"/><rect x="3.3" y="0.3" width="3.4000000000000004" height="2" fill="none" stroke="#fff" stroke-width="1.2"/><path d="M1 3.5 H9 L8.4 11 H1.6Z" fill="#fff"/><rect x="3.2" y="5" width="1" height="5.5" fill="#f75444"/><rect x="4.5" y="5" width="1" height="5.5" fill="#f75444"/><rect x="5.8" y="5" width="1" height="5.5" fill="#f75444"/></svg></div></div>
<div class="cb" style="left:16px;top:197px"></div><div class="cell" style="left:45px;width:93px;top:195px">6</div><div class="cell" style="left:138px;width:150px;top:195px">666</div><div class="cell" style="left:288px;width:197px;top:195px">666.00</div><div class="cell" style="left:664px;width:388px;top:195px">2022-08-31 17:31:21</div><div class="cell" style="left:1052px;width:388px;top:195px">2022-08-31 17:31:21</div><div class="cell" style="left:552px;top:195px;color:#444c69"><svg class="abs" style="left:0;top:4px" width="12" height="12"><circle cx="6" cy="6" r="5.8" fill="#444c69"/></svg><span class="abs" style="left:16px;top:0;color:#3b3f4f">显示</span></div><div class="ops" style="left:1511px;top:194px;background:#18bc9c"><div class="abs" style="left:6px;top:5.5px"><svg width="11" height="11" viewBox="0 0 11 11" ><path d="M0.3 10.7 L1 7.6 L7.7 0.9 L10.1 3.3 L3.4 10Z" fill="#fff"/><path d="M8.4 0.2 L10.8 2.6" stroke="#fff" stroke-width="1"/></svg></div></div><div class="ops" style="left:1537px;top:194px;background:#f75444"><div class="abs" style="left:6px;top:5.5px"><svg width="10" height="11" viewBox="0 0 10 11" ><rect x="0" y="2" width="10" height="1.6" fill="#fff"/><rect x="3.3" y="0.3" width="3.4000000000000004" height="2" fill="none" stroke="#fff" stroke-width="1.2"/><path d="M1 3.5 H9 L8.4 11 H1.6Z" fill="#fff"/><rect x="3.2" y="5" width="1" height="5.5" fill="#f75444"/><rect x="4.5" y="5" width="1" height="5.5" fill="#f75444"/><rect x="5.8" y="5" width="1" height="5.5" fill="#f75444"/></svg></div></div>
<div class="cb" style="left:16px;top:244px"></div><div class="cell" style="left:45px;width:93px;top:242px">5</div><div class="cell" style="left:138px;width:150px;top:242px">250</div><div class="cell" style="left:288px;width:197px;top:242px">250.00</div><div class="cell" style="left:664px;width:388px;top:242px">2022-08-31 17:30:34</div><div class="cell" style="left:1052px;width:388px;top:242px">2022-08-31 17:30:34</div><div class="cell" style="left:552px;top:242px;color:#444c69"><svg class="abs" style="left:0;top:4px" width="12" height="12"><circle cx="6" cy="6" r="5.8" fill="#444c69"/></svg><span class="abs" style="left:16px;top:0;color:#3b3f4f">显示</span></div><div class="ops" style="left:1511px;top:241px;background:#18bc9c"><div class="abs" style="left:6px;top:5.5px"><svg width="11" height="11" viewBox="0 0 11 11" ><path d="M0.3 10.7 L1 7.6 L7.7 0.9 L10.1 3.3 L3.4 10Z" fill="#fff"/><path d="M8.4 0.2 L10.8 2.6" stroke="#fff" stroke-width="1"/></svg></div></div><div class="ops" style="left:1537px;top:241px;background:#f75444"><div class="abs" style="left:6px;top:5.5px"><svg width="10" height="11" viewBox="0 0 10 11" ><rect x="0" y="2" width="10" height="1.6" fill="#fff"/><rect x="3.3" y="0.3" width="3.4000000000000004" height="2" fill="none" stroke="#fff" stroke-width="1.2"/><path d="M1 3.5 H9 L8.4 11 H1.6Z" fill="#fff"/><rect x="3.2" y="5" width="1" height="5.5" fill="#f75444"/><rect x="4.5" y="5" width="1" height="5.5" fill="#f75444"/><rect x="5.8" y="5" width="1" height="5.5" fill="#f75444"/></svg></div></div>
<div class="cb" style="left:16px;top:291px"></div><div class="cell" style="left:45px;width:93px;top:289px">4</div><div class="cell" style="left:138px;width:150px;top:289px">150</div><div class="cell" style="left:288px;width:197px;top:289px">150.00</div><div class="cell" style="left:664px;width:388px;top:289px">2022-08-31 17:30:25</div><div class="cell" style="left:1052px;width:388px;top:289px">2022-08-31 17:30:25</div><div class="cell" style="left:552px;top:289px;color:#444c69"><svg class="abs" style="left:0;top:4px" width="12" height="12"><circle cx="6" cy="6" r="5.8" fill="#444c69"/></svg><span class="abs" style="left:16px;top:0;color:#3b3f4f">显示</span></div><div class="ops" style="left:1511px;top:288px;background:#18bc9c"><div class="abs" style="left:6px;top:5.5px"><svg width="11" height="11" viewBox="0 0 11 11" ><path d="M0.3 10.7 L1 7.6 L7.7 0.9 L10.1 3.3 L3.4 10Z" fill="#fff"/><path d="M8.4 0.2 L10.8 2.6" stroke="#fff" stroke-width="1"/></svg></div></div><div class="ops" style="left:1537px;top:288px;background:#f75444"><div class="abs" style="left:6px;top:5.5px"><svg width="10" height="11" viewBox="0 0 10 11" ><rect x="0" y="2" width="10" height="1.6" fill="#fff"/><rect x="3.3" y="0.3" width="3.4000000000000004" height="2" fill="none" stroke="#fff" stroke-width="1.2"/><path d="M1 3.5 H9 L8.4 11 H1.6Z" fill="#fff"/><rect x="3.2" y="5" width="1" height="5.5" fill="#f75444"/><rect x="4.5" y="5" width="1" height="5.5" fill="#f75444"/><rect x="5.8" y="5" width="1" height="5.5" fill="#f75444"/></svg></div></div>
<div class="cb" style="left:16px;top:338px"></div><div class="cell" style="left:45px;width:93px;top:336px">3</div><div class="cell" style="left:138px;width:150px;top:336px">100</div><div class="cell" style="left:288px;width:197px;top:336px">100.00</div><div class="cell" style="left:664px;width:388px;top:336px">2022-08-31 17:30:12</div><div class="cell" style="left:1052px;width:388px;top:336px">2022-08-31 17:30:12</div><div class="cell" style="left:552px;top:336px;color:#444c69"><svg class="abs" style="left:0;top:4px" width="12" height="12"><circle cx="6" cy="6" r="5.8" fill="#444c69"/></svg><span class="abs" style="left:16px;top:0;color:#3b3f4f">显示</span></div><div class="ops" style="left:1511px;top:335px;background:#18bc9c"><div class="abs" style="left:6px;top:5.5px"><svg width="11" height="11" viewBox="0 0 11 11" ><path d="M0.3 10.7 L1 7.6 L7.7 0.9 L10.1 3.3 L3.4 10Z" fill="#fff"/><path d="M8.4 0.2 L10.8 2.6" stroke="#fff" stroke-width="1"/></svg></div></div><div class="ops" style="left:1537px;top:335px;background:#f75444"><div class="abs" style="left:6px;top:5.5px"><svg width="10" height="11" viewBox="0 0 10 11" ><rect x="0" y="2" width="10" height="1.6" fill="#fff"/><rect x="3.3" y="0.3" width="3.4000000000000004" height="2" fill="none" stroke="#fff" stroke-width="1.2"/><path d="M1 3.5 H9 L8.4 11 H1.6Z" fill="#fff"/><rect x="3.2" y="5" width="1" height="5.5" fill="#f75444"/><rect x="4.5" y="5" width="1" height="5.5" fill="#f75444"/><rect x="5.8" y="5" width="1" height="5.5" fill="#f75444"/></svg></div></div>
<div class="cb" style="left:16px;top:385px"></div><div class="cell" style="left:45px;width:93px;top:383px">2</div><div class="cell" style="left:138px;width:150px;top:383px">50</div><div class="cell" style="left:288px;width:197px;top:383px">50.00</div><div class="cell" style="left:664px;width:388px;top:383px">2022-08-31 17:30:04</div><div class="cell" style="left:1052px;width:388px;top:383px">2022-09-15 11:37:02</div><div class="cell" style="left:552px;top:383px;color:#18bc9c"><svg class="abs" style="left:0;top:4px" width="12" height="12"><circle cx="6" cy="6" r="5.8" fill="#18bc9c"/></svg><span class="abs" style="left:16px;top:0;color:#17a88b">隐藏</span></div><div class="ops" style="left:1511px;top:382px;background:#18bc9c"><div class="abs" style="left:6px;top:5.5px"><svg width="11" height="11" viewBox="0 0 11 11" ><path d="M0.3 10.7 L1 7.6 L7.7 0.9 L10.1 3.3 L3.4 10Z" fill="#fff"/><path d="M8.4 0.2 L10.8 2.6" stroke="#fff" stroke-width="1"/></svg></div></div><div class="ops" style="left:1537px;top:382px;background:#f75444"><div class="abs" style="left:6px;top:5.5px"><svg width="10" height="11" viewBox="0 0 10 11" ><rect x="0" y="2" width="10" height="1.6" fill="#fff"/><rect x="3.3" y="0.3" width="3.4000000000000004" height="2" fill="none" stroke="#fff" stroke-width="1.2"/><path d="M1 3.5 H9 L8.4 11 H1.6Z" fill="#fff"/><rect x="3.2" y="5" width="1" height="5.5" fill="#f75444"/><rect x="4.5" y="5" width="1" height="5.5" fill="#f75444"/><rect x="5.8" y="5" width="1" height="5.5" fill="#f75444"/></svg></div></div>
<div class="cb" style="left:16px;top:432px"></div><div class="cell" style="left:45px;width:93px;top:430px">1</div><div class="cell" style="left:138px;width:150px;top:430px">10</div><div class="cell" style="left:288px;width:197px;top:430px">10.00</div><div class="cell" style="left:664px;width:388px;top:430px">2022-08-31 17:29:53</div><div class="cell" style="left:1052px;width:388px;top:430px">2022-09-15 11:36:55</div><div class="cell" style="left:552px;top:430px;color:#18bc9c"><svg class="abs" style="left:0;top:4px" width="12" height="12"><circle cx="6" cy="6" r="5.8" fill="#18bc9c"/></svg><span class="abs" style="left:16px;top:0;color:#17a88b">隐藏</span></div><div class="ops" style="left:1511px;top:429px;background:#18bc9c"><div class="abs" style="left:6px;top:5.5px"><svg width="11" height="11" viewBox="0 0 11 11" ><path d="M0.3 10.7 L1 7.6 L7.7 0.9 L10.1 3.3 L3.4 10Z" fill="#fff"/><path d="M8.4 0.2 L10.8 2.6" stroke="#fff" stroke-width="1"/></svg></div></div><div class="ops" style="left:1537px;top:429px;background:#f75444"><div class="abs" style="left:6px;top:5.5px"><svg width="10" height="11" viewBox="0 0 10 11" ><rect x="0" y="2" width="10" height="1.6" fill="#fff"/><rect x="3.3" y="0.3" width="3.4000000000000004" height="2" fill="none" stroke="#fff" stroke-width="1.2"/><path d="M1 3.5 H9 L8.4 11 H1.6Z" fill="#fff"/><rect x="3.2" y="5" width="1" height="5.5" fill="#f75444"/><rect x="4.5" y="5" width="1" height="5.5" fill="#f75444"/><rect x="5.8" y="5" width="1" height="5.5" fill="#f75444"/></svg></div></div>
<div class="tr" style="top:463px;height:1px;background:#e8e8e8"></div>

  </div>
  <div class="abs" style="left:15px;top:605px;line-height:20px;color:#333;white-space:nowrap">显示第 1 到第 9 条记录，总共 9 条记录</div>
</div>
<div class="abs" style="left:1860px;top:30px;width:44px;height:25px;overflow:hidden"><svg width="44" height="44" viewBox="0 0 44 44"><circle cx="21.5" cy="20.6" r="15.2" fill="none" stroke="#bdbdbd" stroke-width="4.6"/><path d="M13.5 26 A8.5 8.5 0 1 1 28.5 16.5" fill="none" stroke="#bdbdbd" stroke-width="5"/></svg></div>
</body>
</html>
